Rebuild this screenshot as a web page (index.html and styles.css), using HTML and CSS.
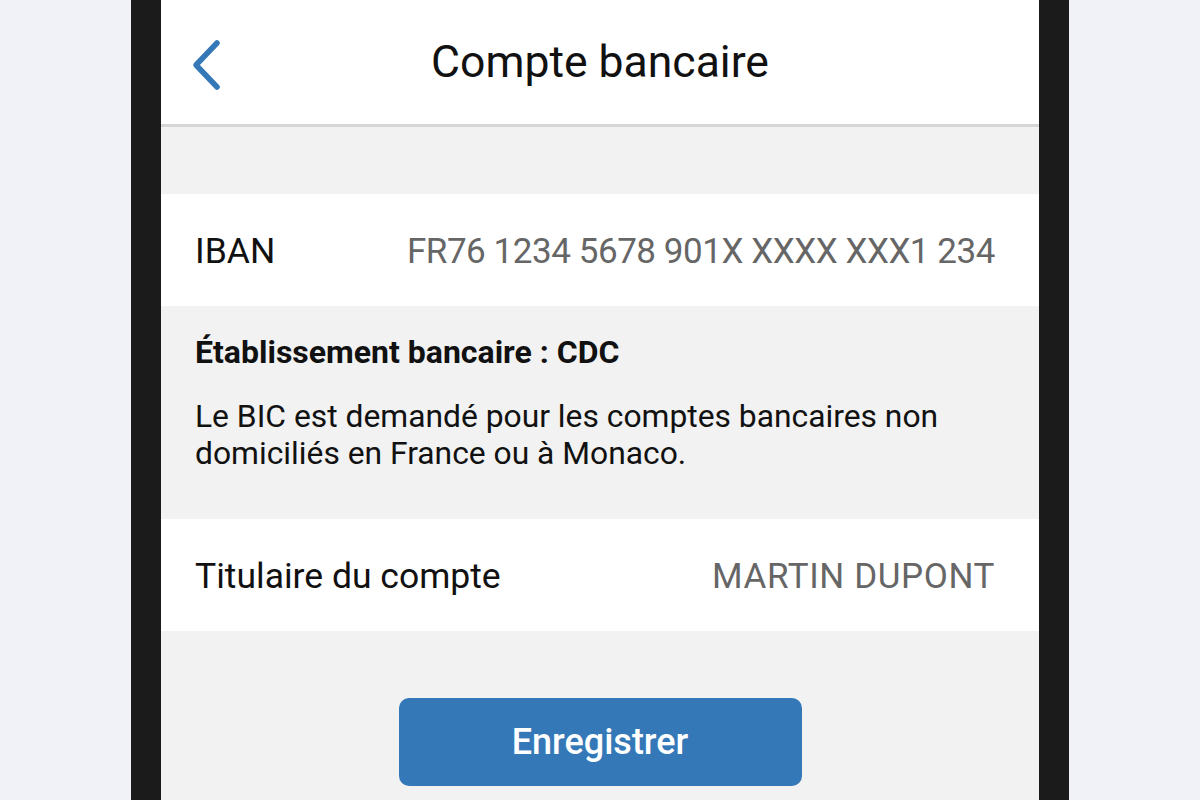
FILE: index.html
```html
<!DOCTYPE html>
<html lang="fr">
<head>
<meta charset="utf-8">
<title>Compte bancaire</title>
<link rel="stylesheet" href="styles.css">
</head>
<body>
<div class="stage">
  <div class="phone">
    <div class="screen">
      <header class="topbar">
        <button class="back" aria-label="Retour">
          <svg width="34" height="56" viewBox="0 0 34 56"><path d="M25 6 L4 28 L25 50" fill="none" stroke="#3478b8" stroke-width="5.5" stroke-linecap="round" stroke-linejoin="round"/></svg>
        </button>
        <h1 class="title">Compte bancaire</h1>
      </header>
      <div class="spacer"></div>
      <div class="row">
        <span class="label">IBAN</span>
        <span class="value value-iban">FR76 1234 5678 901X XXXX XXX1 234</span>
      </div>
      <div class="info">
        <p class="bank">Établissement bancaire : CDC</p>
        <p class="note">Le BIC est demandé pour les comptes bancaires non domiciliés en France ou à Monaco.</p>
      </div>
      <div class="row">
        <span class="label">Titulaire du compte</span>
        <span class="value value-name">MARTIN DUPONT</span>
      </div>
      <div class="actions">
        <button class="save">Enregistrer</button>
      </div>
    </div>
  </div>
</div>
</body>
</html>
```

FILE: styles.css
```css
* { box-sizing: border-box; }
html, body { margin: 0; padding: 0; }
body {
  background: #f0f2f7;
  font-family: Roboto, "Liberation Sans", sans-serif;
  width: 1200px;
  height: 800px;
  overflow: hidden;
}
.stage {
  display: flex;
  justify-content: center;
  height: 800px;
}
.phone {
  width: 938px;
  background: #1b1b1b;
  padding: 0 30px;
  height: 800px;
}
.screen {
  background: #f2f2f2;
  height: 800px;
  display: flex;
  flex-direction: column;
}
.topbar {
  height: 127px;
  flex: none;
  background: #fff;
  border-bottom: 3px solid #d6d6d6;
  display: flex;
  align-items: center;
  justify-content: center;
  position: relative;
}
.back {
  position: absolute;
  left: 31px;
  top: 37px;
  background: none;
  border: 0;
  padding: 0;
  width: 34px;
  height: 56px;
}
.back svg { display: block; }
.title {
  margin: 0;
  font-weight: 400;
  font-size: 44.5px;
  line-height: 52px;
  color: #111;
}
.spacer { height: 67px; flex: none; }
.row {
  height: 112px;
  flex: none;
  background: #fff;
  display: flex;
  align-items: center;
  justify-content: space-between;
  padding: 2px 44px 0 34px;
}
.label {
  font-size: 35.5px;
  color: #111;
}
.value {
  font-size: 35px;
  color: #666;
}
.value-iban { letter-spacing: -0.45px; }
.value-name { letter-spacing: 0.6px; }
.info {
  flex: none;
  height: 213px;
  padding: 27px 34px 0;
}
.bank {
  margin: 0 0 27px;
  font-size: 32px;
  line-height: 38px;
  font-weight: 700;
  color: #111;
}
.note {
  margin: 0;
  font-size: 31.8px;
  line-height: 37px;
  color: #111;
  max-width: 800px;
}
.actions {
  display: flex;
  justify-content: center;
  padding-top: 67px;
}
.save {
  width: 403px;
  height: 88px;
  background: #3478b8;
  border: 0;
  border-radius: 10px;
  color: #fff;
  font-family: Roboto, "Liberation Sans", sans-serif;
  font-size: 36px;
  font-weight: 500;
}
```
